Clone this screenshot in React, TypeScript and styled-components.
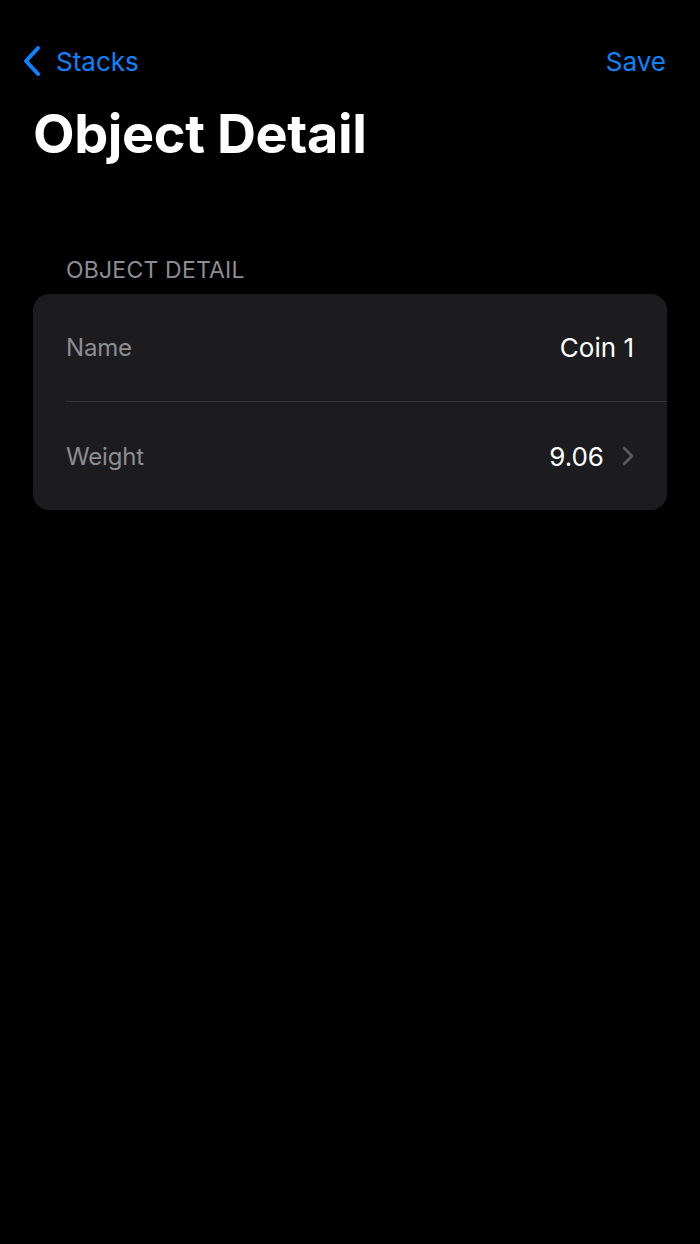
import React from "react";
import styled, { createGlobalStyle } from "styled-components";

const Global = createGlobalStyle`
  html, body { margin: 0; padding: 0; background: #000; }
  body { font-family: Inter, "Noto Sans", sans-serif; -webkit-font-smoothing: antialiased; }
  #root { min-height: 1244px; background: #000; }
`;

const Screen = styled.div`
  width: 700px;
  min-height: 1244px;
  background: #000;
  display: flex;
  flex-direction: column;
`;

const NavBar = styled.div`
  display: flex;
  align-items: center;
  justify-content: space-between;
  height: 40px;
  margin-top: 41px;
  padding: 0 34px 0 22px;
`;

const BackButton = styled.div`
  display: flex;
  align-items: center;
  gap: 14px;
  color: #0a84ff;
  font-size: 26px;
  letter-spacing: 0px;
`;

const NavAction = styled.div`
  color: #0a84ff;
  font-size: 26px;
  letter-spacing: 0px;
`;

const Title = styled.h1`
  margin: 23px 0 0 33px;
  font-size: 54px;
  font-weight: 700;
  color: #fff;
  letter-spacing: -0.4px;
  line-height: 60px;
`;

const Section = styled.div`
  margin: 93px 33px 0 33px;
  display: flex;
  flex-direction: column;
`;

const SectionHeader = styled.div`
  padding-left: 33px;
  color: #8d8d93;
  font-size: 23px;
  letter-spacing: 0.2px;
  line-height: 26px;
  margin-bottom: 11px;
`;

const Card = styled.div`
  background: #1c1c1e;
  border-radius: 16px;
  overflow: hidden;
`;

const Row = styled.div<{ $divider?: boolean }>`
  display: flex;
  align-items: center;
  justify-content: space-between;
  height: 108px;
  margin-left: 33px;
  padding-right: 33px;
  border-bottom: ${(p) => (p.$divider ? "1px solid #38383a" : "none")};
  box-sizing: border-box;
`;

const Label = styled.span`
  color: #8d8d93;
  font-size: 24px;
  letter-spacing: -0.2px;
`;

const Value = styled.span`
  color: #fff;
  font-size: 26px;
  letter-spacing: 0px;
  display: flex;
  align-items: center;
  gap: 18px;
`;

const Chevron = () => (
  <svg width="12" height="20" viewBox="0 0 12 20" fill="none">
    <path d="M2 2l8 8-8 8" stroke="#5b5b60" strokeWidth="2.6" strokeLinecap="round" strokeLinejoin="round" />
  </svg>
);

const BackChevron = () => (
  <svg width="20" height="32" viewBox="0 0 20 32" fill="none">
    <path d="M16 3L4 16l12 13" stroke="#0a84ff" strokeWidth="4" strokeLinecap="round" strokeLinejoin="round" />
  </svg>
);

export default function App() {
  return (
    <>
      <Global />
      <Screen>
        <NavBar>
          <BackButton>
            <BackChevron />
            Stacks
          </BackButton>
          <NavAction>Save</NavAction>
        </NavBar>
        <Title>Object Detail</Title>
        <Section>
          <SectionHeader>OBJECT DETAIL</SectionHeader>
          <Card>
            <Row $divider>
              <Label>Name</Label>
              <Value>Coin 1</Value>
            </Row>
            <Row>
              <Label>Weight</Label>
              <Value>
                9.06
                <Chevron />
              </Value>
            </Row>
          </Card>
        </Section>
      </Screen>
    </>
  );
}
